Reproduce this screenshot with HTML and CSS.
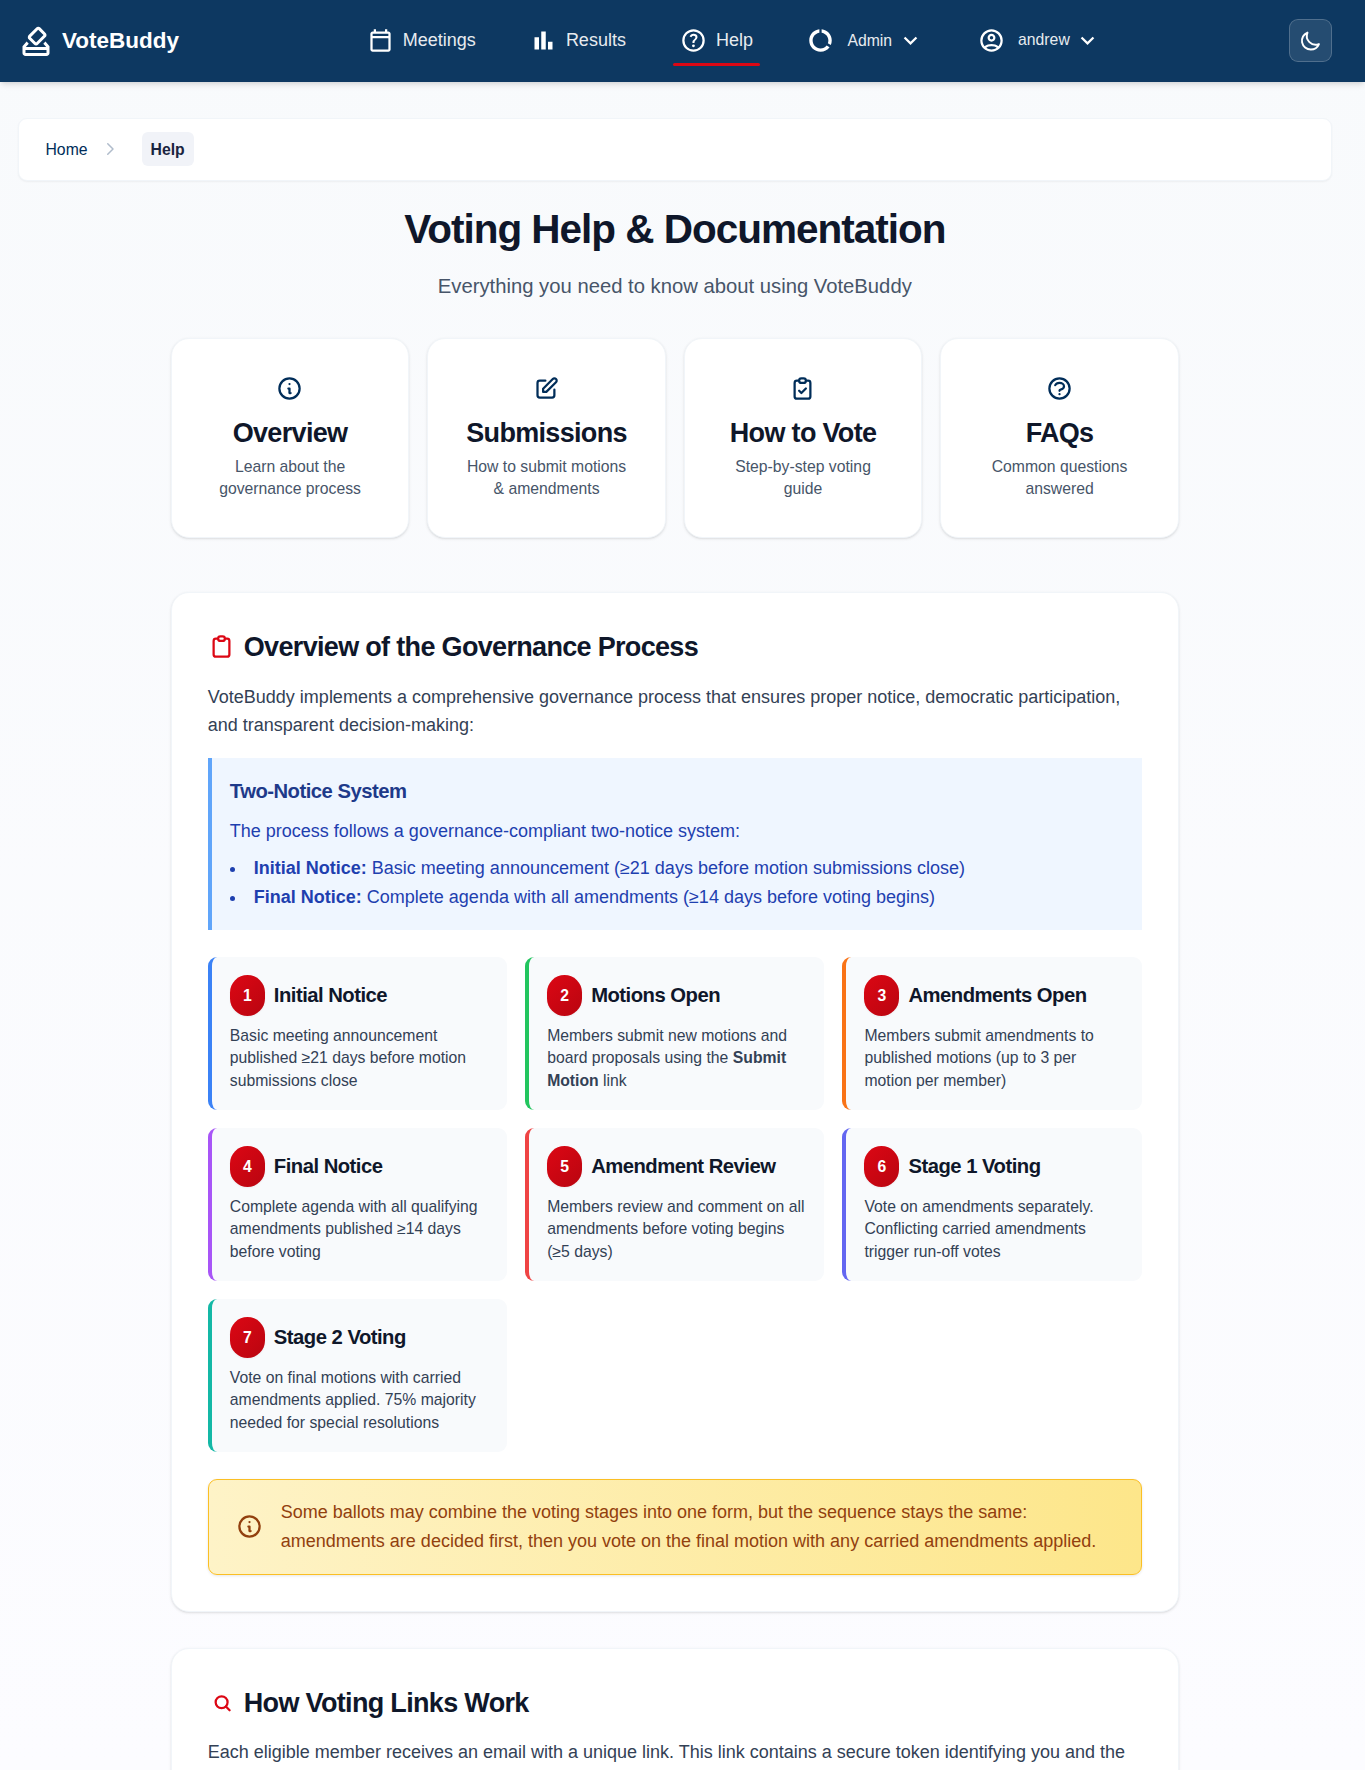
FILE: index.html
```html
<!DOCTYPE html>
<html lang="en">
<head>
<meta charset="utf-8">
<title>Help - VoteBuddy</title>
<link rel="stylesheet" href="styles.css">
</head>
<body>
<header class="site-header">
  <div class="header-inner">
    <a class="brand">
      <svg class="logo" viewBox="0 -960 960 960" fill="currentColor"><path d="M200-80q-33 0-56.5-23.5T120-160v-182l110-125 57 57-80 90h546l-78-88 57-57 108 123v182q0 33-23.5 56.5T760-80H200Zm0-80h560v-80H200v80Zm225-225L284-526q-23-23-22.5-56.5T285-639l196-196q23-23 57-24t57 22l141 141q23 23 24 56t-22 56L538-384q-23 23-56.5 22.5T425-385Zm255-254L539-780 341-582l141 141 198-198Z"/></svg>
      <span>VoteBuddy</span>
    </a>
    <nav class="main-nav">
      <a class="nav-link">
        <svg class="icon" viewBox="0 -960 960 960" fill="currentColor"><path d="M200-80q-33 0-56.5-23.5T120-160v-560q0-33 23.5-56.5T200-800h40v-80h80v80h320v-80h80v80h40q33 0 56.5 23.5T840-720v560q0 33-23.5 56.5T760-80H200Zm0-80h560v-400H200v400Zm0-480h560v-80H200v80Z"/></svg>
        <span class="nav-text">Meetings</span>
      </a>
      <a class="nav-link">
        <svg class="icon" viewBox="0 -960 960 960" fill="currentColor"><path d="M640-160v-280h160v280H640Zm-240 0v-640h160v640H400Zm-240 0v-440h160v440H160Z"/></svg>
        <span class="nav-text">Results</span>
      </a>
      <a class="nav-link nav-link-active">
        <svg class="icon" viewBox="0 -960 960 960" fill="currentColor"><path d="M478-240q21 0 35.5-14.5T528-290q0-21-14.5-35.5T478-340q-21 0-35.5 14.5T428-290q0 21 14.5 35.5T478-240Zm-36-154h74q0-33 7.5-52t42.5-52q26-26 41-49.5t15-56.5q0-56-41-86t-97-30q-57 0-92.5 30T342-618l66 26q5-18 22.5-39t53.5-21q32 0 48 17.5t16 38.5q0 20-12 37.5T506-526q-44 39-54 59t-10 73Zm38 314q-83 0-156-31.5T197-197q-54-54-85.5-127T80-480q0-83 31.5-156T197-763q54-54 127-85.5T480-880q83 0 156 31.5T763-763q54 54 85.5 127T880-480q0 83-31.5 156T763-197q-54 54-127 85.5T480-80Zm0-80q134 0 227-93t93-227q0-134-93-227t-227-93q-134 0-227 93t-93 227q0 134 93 227t227 93Z"/></svg>
        <span class="nav-text">Help</span>
      </a>
      <button class="nav-link nav-menu">
        <svg class="icon" viewBox="0 0 24 24" fill="currentColor"><path d="M13 2.05v3.03c3.39.49 6 3.39 6 6.92 0 .9-.18 1.75-.48 2.54l2.6 1.53c.56-1.24.88-2.62.88-4.07 0-5.18-3.95-9.45-9-9.95zM12 19c-3.87 0-7-3.13-7-7 0-3.53 2.61-6.43 6-6.92V2.05c-5.06.5-9 4.76-9 9.95 0 5.52 4.47 10 9.99 10 3.31 0 6.24-1.61 8.06-4.09l-2.6-1.53C16.17 17.98 14.21 19 12 19z"/></svg>
        <span class="nav-text">Admin</span>
        <svg class="icon caret" viewBox="0 0 24 24" fill="currentColor"><path d="M16.59 8.59 12 13.17 7.41 8.59 6 10l6 6 6-6z"/></svg>
      </button>
      <button class="nav-link nav-menu">
        <svg class="icon" viewBox="0 -960 960 960" fill="currentColor"><path d="M234-276q51-39 114-61.5T480-360q69 0 132 22.5T726-276q35-41 54.5-93T800-480q0-133-93.5-226.5T480-800q-133 0-226.5 93.5T160-480q0 59 19.5 111t54.5 93Zm246-164q-59 0-99.5-40.5T340-580q0-59 40.5-99.5T480-720q59 0 99.5 40.5T620-580q0 59-40.5 99.5T480-440Zm0 360q-83 0-156-31.5T197-197q-54-54-85.5-127T80-480q0-83 31.5-156T197-763q54-54 127-85.5T480-880q83 0 156 31.5T763-763q54 54 85.5 127T880-480q0 83-31.5 156T763-197q-54 54-127 85.5T480-80Zm0-80q53 0 100-15.5t86-44.5q-39-29-86-44.5T480-280q-53 0-100 15.5T294-220q39 29 86 44.5T480-160Zm0-360q26 0 43-17t17-43q0-26-17-43t-43-17q-26 0-43 17t-17 43q0 26 17 43t43 17Z"/></svg>
        <span class="nav-text nav-user">andrew</span>
        <svg class="icon caret" viewBox="0 0 24 24" fill="currentColor"><path d="M16.59 8.59 12 13.17 7.41 8.59 6 10l6 6 6-6z"/></svg>
      </button>
    </nav>
    <button class="theme-toggle" aria-label="Toggle theme">
      <svg class="moon" viewBox="0 0 24 24"><path d="M20.354 15.354A9 9 0 018.646 3.646 9.003 9.003 0 0012 21a9.003 9.003 0 008.354-5.646z"/></svg>
    </button>
  </div>
</header>

<main class="page">
  <nav class="breadcrumbs" aria-label="Breadcrumb">
    <a>Home</a>
    <svg class="crumb-sep" viewBox="0 0 24 24"><path d="M9 5l7 7-7 7"/></svg>
    <span class="crumb-current">Help</span>
  </nav>

  <div class="content">
    <div class="hero">
      <h1>Voting Help &amp; Documentation</h1>
      <p>Everything you need to know about using VoteBuddy</p>
    </div>

    <div class="quick-links">
      <a class="card quick-link">
        <svg class="icon line-icon" viewBox="0 0 24 24"><path d="M13 16h-1v-4h-1m1-4h.01M21 12a9 9 0 11-18 0 9 9 0 0118 0z"/></svg>
        <h2>Overview</h2>
        <p>Learn about the governance process</p>
      </a>
      <a class="card quick-link">
        <svg class="icon line-icon" viewBox="0 0 24 24"><path d="M11 5H6a2 2 0 00-2 2v11a2 2 0 002 2h11a2 2 0 002-2v-5m-1.414-9.414a2 2 0 112.828 2.828L11.828 15H9v-2.828l8.586-8.586z"/></svg>
        <h2>Submissions</h2>
        <p>How to submit motions &amp; amendments</p>
      </a>
      <a class="card quick-link">
        <svg class="icon line-icon" viewBox="0 0 24 24"><path d="M9 5H7a2 2 0 00-2 2v12a2 2 0 002 2h10a2 2 0 002-2V7a2 2 0 00-2-2h-2M9 5a2 2 0 002 2h2a2 2 0 002-2M9 5a2 2 0 012-2h2a2 2 0 012 2m-6 9l2 2 4-4"/></svg>
        <h2>How to Vote</h2>
        <p>Step-by-step voting guide</p>
      </a>
      <a class="card quick-link">
        <svg class="icon line-icon" viewBox="0 0 24 24"><path d="M8.228 9c.549-1.165 2.03-2 3.772-2 2.21 0 4 1.343 4 3 0 1.4-1.278 2.575-3.006 2.907-.542.104-.994.54-.994 1.093m0 3h.01M21 12a9 9 0 11-18 0 9 9 0 0118 0z"/></svg>
        <h2>FAQs</h2>
        <p>Common questions answered</p>
      </a>
    </div>

    <section class="card section">
      <h2 class="section-title">
        <svg class="icon line-icon" viewBox="0 0 24 24"><path d="M9 5H7a2 2 0 00-2 2v12a2 2 0 002 2h10a2 2 0 002-2V7a2 2 0 00-2-2h-2M9 5a2 2 0 002 2h2a2 2 0 002-2M9 5a2 2 0 012-2h2a2 2 0 012 2"/></svg>
        Overview of the Governance Process
      </h2>
      <p class="lead">VoteBuddy implements a comprehensive governance process that ensures proper notice, democratic participation, and transparent decision-making:</p>

      <div class="callout">
        <h3>Two-Notice System</h3>
        <p>The process follows a governance-compliant two-notice system:</p>
        <ul>
          <li><strong>Initial Notice:</strong> Basic meeting announcement (≥21 days before motion submissions close)</li>
          <li><strong>Final Notice:</strong> Complete agenda with all amendments (≥14 days before voting begins)</li>
        </ul>
      </div>

      <div class="steps">
        <div class="step step-blue">
          <div class="step-head"><span class="step-number">1</span><h3>Initial Notice</h3></div>
          <p>Basic meeting announcement published ≥21 days before motion submissions close</p>
        </div>
        <div class="step step-green">
          <div class="step-head"><span class="step-number">2</span><h3>Motions Open</h3></div>
          <p>Members submit new motions and board proposals using the <strong>Submit Motion</strong> link</p>
        </div>
        <div class="step step-orange">
          <div class="step-head"><span class="step-number">3</span><h3>Amendments Open</h3></div>
          <p>Members submit amendments to published motions (up to 3 per motion per member)</p>
        </div>
        <div class="step step-purple">
          <div class="step-head"><span class="step-number">4</span><h3>Final Notice</h3></div>
          <p>Complete agenda with all qualifying amendments published ≥14 days before voting</p>
        </div>
        <div class="step step-red">
          <div class="step-head"><span class="step-number">5</span><h3>Amendment Review</h3></div>
          <p>Members review and comment on all amendments before voting begins (≥5 days)</p>
        </div>
        <div class="step step-indigo">
          <div class="step-head"><span class="step-number">6</span><h3>Stage 1 Voting</h3></div>
          <p>Vote on amendments separately. Conflicting carried amendments trigger run-off votes</p>
        </div>
        <div class="step step-teal">
          <div class="step-head"><span class="step-number">7</span><h3>Stage 2 Voting</h3></div>
          <p>Vote on final motions with carried amendments applied. 75% majority needed for special resolutions</p>
        </div>
      </div>

      <div class="notice">
        <svg class="icon line-icon" viewBox="0 0 24 24"><path d="M13 16h-1v-4h-1m1-4h.01M21 12a9 9 0 11-18 0 9 9 0 0118 0z"/></svg>
        <p>Some ballots may combine the voting stages into one form, but the sequence stays the same: amendments are decided first, then you vote on the final motion with any carried amendments applied.</p>
      </div>
    </section>

    <section class="card section">
      <h2 class="section-title">
        <svg class="icon line-icon" viewBox="0 0 24 24"><circle cx="12.1" cy="11.8" r="5.3"/><path d="M15.9 15.6L19.2 18.9"/></svg>
        How Voting Links Work
      </h2>
      <p class="lead">Each eligible member receives an email with a unique link. This link contains a secure token identifying you and the</p>
    </section>
  </div>
</main>
</body>
</html>
```
FILE: styles.css
```css
*, *::before, *::after {
  box-sizing: border-box;
}

html {
  font-size: 18px;
  height: 1770px;
  overflow: hidden;
}

body {
  margin: 0;
  height: 1770px;
  overflow: hidden;
  font-family: Arial, "Liberation Sans", sans-serif;
  line-height: 1.6;
  color: #0f172a;
  background: linear-gradient(180deg, #f8fafc 0, #fcfcff 1770px);
}

h1, h2, h3, p, ul {
  margin: 0;
  padding: 0;
}

h1, h2, h3 {
  font-weight: 700;
  letter-spacing: -0.025em;
  line-height: 1.3;
  color: #0f172a;
}

h2 {
  font-size: 1.5rem;
}

h3 {
  font-size: 1.125rem;
  line-height: 1.75rem;
}

button {
  font-family: inherit;
  border: 0;
  margin: 0;
  background: none;
}

svg {
  display: block;
  flex: none;
}

.icon {
  width: 1.5rem;
  height: 1.5rem;
}

.line-icon, .moon, .crumb-sep {
  fill: none;
  stroke: currentColor;
  stroke-width: 2;
  stroke-linecap: round;
  stroke-linejoin: round;
}

/* Header */
.site-header {
  position: relative;
  height: 82px;
  background: #0d3861;
  color: #fff;
  box-shadow: 0 4px 6px -1px rgba(0, 0, 0, 0.1), 0 2px 4px -2px rgba(0, 0, 0, 0.1);
}

.header-inner {
  display: flex;
  align-items: center;
  justify-content: space-between;
  width: 1350px;
  height: 81px;
  padding: 0 1rem;
}

.brand {
  display: flex;
  align-items: center;
  gap: 8px;
  font-size: 1.25rem;
  font-weight: 700;
}

.logo {
  width: 2rem;
  height: 2rem;
}

.main-nav {
  display: flex;
  align-items: center;
  gap: 1rem;
}

.nav-link {
  position: relative;
  display: flex;
  align-items: center;
  gap: 0.5rem;
  height: 51px;
  padding: 0 1rem;
  color: #fff;
  font-size: 1rem;
}

.nav-text {
  opacity: 0.9;
}

.nav-link-active::after {
  content: "";
  position: absolute;
  left: 10%;
  bottom: 0;
  width: 80%;
  height: 3px;
  border-radius: 2px;
  background: #dc0714;
}

.nav-menu {
  gap: 0.75rem;
  font-size: 0.875rem;
}

.nav-user {
  padding-bottom: 2px;
}

.caret {
  margin-left: -0.5rem;
}

.theme-toggle {
  display: flex;
  align-items: center;
  justify-content: center;
  width: 43px;
  height: 43px;
  padding: 0;
  border: 1px solid rgba(255, 255, 255, 0.2);
  border-radius: 9px;
  background: rgba(255, 255, 255, 0.1);
  color: #fff;
}

.moon {
  width: 23.5px;
  height: 23.5px;
}

/* Page */
.page {
  width: 1349.6px;
  padding: 2rem 1rem 0;
}

.breadcrumbs {
  display: flex;
  align-items: center;
  padding: 13px 26.5px 14px;
  border: 1px solid #f1f5f9;
  border-radius: 9px;
  background: #fff;
  box-shadow: 0 1px 2px rgba(0, 0, 0, 0.05);
  color: #002d59;
  font-size: 0.875rem;
}

.crumb-sep {
  width: 1rem;
  height: 1rem;
  margin: 0 23px 0 13px;
  color: #b0bccb;
}

.crumb-current {
  padding: 0.25rem 0.5rem;
  border-radius: 6px;
  background: #f1f3f8;
  color: #1a2440;
  font-weight: 700;
}

.content {
  width: 56rem;
  margin: 0 auto;
}

.hero {
  padding: 22px 0 2rem;
  text-align: center;
}

.hero h1 {
  margin-bottom: 14px;
  font-size: 2.25rem;
}

.hero p {
  color: #475569;
  font-size: 1.125rem;
}

.card {
  border: 1px solid #f1f5f9;
  border-radius: 18px;
  background: #fff;
  box-shadow: 0 1px 3px rgba(0, 0, 0, 0.1), 0 1px 2px -1px rgba(0, 0, 0, 0.1);
}

.quick-links {
  display: grid;
  grid-template-columns: repeat(4, 1fr);
  gap: 1rem;
  margin-bottom: 3rem;
}

.quick-link {
  min-height: 200.25px;
  padding: 2rem;
  text-align: center;
}

.quick-link .icon {
  margin: 0 0 0.75rem calc(50% - 13.8px);
  color: #002d59;
}

.quick-link h2 {
  margin: 0 -1rem 5px;
}

.quick-link p {
  color: #475569;
  font-size: 0.875rem;
  line-height: 1.25rem;
}

/* Sections */
.section {
  margin-bottom: 36.5px;
  padding: 2rem;
}

.section-title {
  display: flex;
  align-items: center;
  gap: 0.5rem;
  margin-bottom: 17.1px;
  line-height: 2rem;
}

.section-title .icon {
  margin-bottom: 2px;
  color: #dc0714;
}

.lead {
  margin-bottom: 1rem;
  color: #334155;
}

.callout {
  margin-bottom: 1.5rem;
  padding: 1rem;
  border-left: 4px solid #60a5fa;
  background: #eff6ff;
  color: #1e40af;
}

.callout h3, .callout p {
  margin-bottom: 0.5rem;
}

.callout h3 {
  color: #1e3a8a;
}

.callout ul {
  list-style: disc inside;
}

.steps {
  display: grid;
  grid-template-columns: repeat(3, 1fr);
  gap: 1rem;
  margin-bottom: 1.5rem;
}

.step {
  padding: 1rem;
  border-left: 4px solid;
  border-radius: 9px;
  background: #f8fafc;
}

.step-blue { border-color: #3b82f6; }
.step-green { border-color: #22c55e; }
.step-orange { border-color: #f97316; }
.step-purple { border-color: #a855f7; }
.step-red { border-color: #ef4444; }
.step-indigo { border-color: #6366f1; }
.step-teal { border-color: #14b8a6; }

.step-head {
  display: flex;
  align-items: center;
  gap: 0.5rem;
  margin-bottom: 0.5rem;
}

.step-number {
  display: flex;
  align-items: center;
  justify-content: center;
  width: 35px;
  height: 2.25rem;
  border-radius: 999px;
  background: linear-gradient(135deg, #dc0714, #b90510);
  box-shadow: 0 1px 2px rgba(0, 0, 0, 0.05);
  color: #fff;
  font-size: 0.875rem;
  font-weight: 700;
}

.step p {
  color: #334155;
  font-size: 0.875rem;
  line-height: 1.25rem;
}

.notice {
  display: flex;
  align-items: center;
  gap: 1rem;
  padding: 1rem 1.5rem;
  border: 1px solid #fbbf24;
  border-radius: 9px;
  background: linear-gradient(90deg, #fef3c7, #fde68a);
  box-shadow: 0 1px 3px rgba(0, 0, 0, 0.1);
  color: #92400e;
}
```
